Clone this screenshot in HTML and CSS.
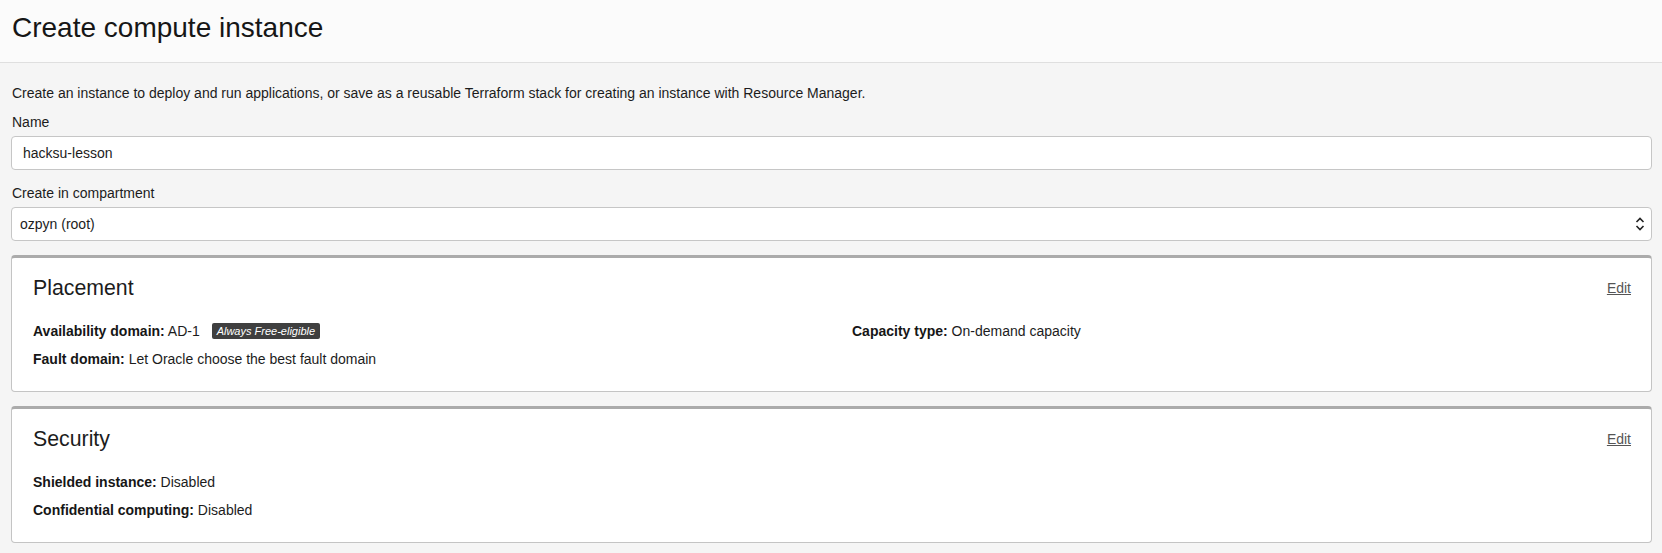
FILE: index.html
```html
<!DOCTYPE html>
<html lang="en">
<head>
<meta charset="utf-8">
<title>Create compute instance</title>
<link rel="stylesheet" href="styles.css">
</head>
<body>
<header class="page-header">
  <h1 class="page-title">Create compute instance</h1>
</header>
<main class="page-body">
  <p class="intro">Create an instance to deploy and run applications, or save as a reusable Terraform stack for creating an instance with Resource Manager.</p>

  <label class="field-label" for="name">Name</label>
  <div class="text-input" id="name">hacksu-lesson</div>

  <label class="field-label second" for="compartment">Create in compartment</label>
  <div class="select-input" id="compartment">
    <span>ozpyn (root)</span>
    <svg class="chevrons" width="10" height="16" viewBox="0 0 10 16" aria-hidden="true">
      <path d="M1.5 6 L5 2.5 L8.5 6" fill="none" stroke="#222" stroke-width="1.6"/>
      <path d="M1.5 10 L5 13.5 L8.5 10" fill="none" stroke="#222" stroke-width="1.6"/>
    </svg>
  </div>

  <section class="card">
    <div class="card-head">
      <h2 class="card-title">Placement</h2>
      <a class="edit-link" href="#">Edit</a>
    </div>
    <div class="card-grid">
      <div class="col">
        <div class="row"><b>Availability domain:</b> AD-1 <span class="badge">Always Free-eligible</span></div>
        <div class="row"><b>Fault domain:</b> Let Oracle choose the best fault domain</div>
      </div>
      <div class="col">
        <div class="row"><b>Capacity type:</b> On-demand capacity</div>
      </div>
    </div>
  </section>

  <section class="card">
    <div class="card-head">
      <h2 class="card-title">Security</h2>
      <a class="edit-link" href="#">Edit</a>
    </div>
    <div class="card-grid single">
      <div class="col">
        <div class="row"><b>Shielded instance:</b> Disabled</div>
        <div class="row"><b>Confidential computing:</b> Disabled</div>
      </div>
    </div>
  </section>
</main>
</body>
</html>
```

FILE: styles.css
```css
* { box-sizing: border-box; }

html, body {
  margin: 0;
  padding: 0;
  background: #f5f5f5;
  color: #1c1c1c;
  font-family: "Liberation Sans", Arial, sans-serif;
  font-size: 14px;
}

.page-header {
  height: 63px;
  background: #fbfbfb;
  border-bottom: 1px solid #dfdfdf;
  padding: 11px 12px 0;
}

.page-title {
  margin: 0;
  font-size: 28px;
  font-weight: normal;
  line-height: 34px;
  color: #161616;
}

.page-body {
  padding: 20px 10px 0 11px;
}

.intro {
  margin: 0 0 0 1px;
  line-height: 20px;
  font-size: 14px;
}

.field-label {
  display: block;
  margin: 9px 0 4px 1px;
  line-height: 20px;
  font-size: 14px;
}

.field-label.second {
  margin-top: 13px;
}

.text-input,
.select-input {
  background: #fff;
  border: 1px solid #c6c6c6;
  border-radius: 4px;
  height: 34px;
  display: flex;
  align-items: center;
  font-size: 14px;
}

.text-input {
  padding-left: 11px;
}

.select-input {
  padding: 0 6px 0 8px;
  justify-content: space-between;
}

.chevrons { display: block; }

.card {
  background: #fff;
  border: 1px solid #c4c4c4;
  border-top: 3px solid #ababab;
  border-radius: 4px;
  padding: 17px 20px 22px 21px;
  margin-top: 14px;
}

.card + .card { margin-top: 14px; }

.card-head {
  display: flex;
  justify-content: space-between;
  align-items: center;
  height: 26px;
}

.card-title {
  margin: 0;
  font-size: 21.3px;
  font-weight: normal;
  line-height: 26px;
  color: #1c1c1c;
}

.edit-link {
  font-size: 14px;
  color: #555;
  text-decoration: underline;
}

.card-grid {
  display: grid;
  grid-template-columns: 819px 1fr;
  margin-top: 20px;
}

.card-grid.single { grid-template-columns: 1fr; margin-top: 20px; }

.col {
  display: flex;
  flex-direction: column;
  gap: 8px;
}

.row {
  line-height: 20px;
  height: 20px;
  display: flex;
  align-items: center;
  white-space: pre;
}

.row b {
  font-weight: bold;
  color: #161616;
}

.badge {
  display: inline-block;
  margin-left: 8px;
  background: #3f3f3f;
  color: #fff;
  font-style: italic;
  font-size: 11px;
  line-height: 16px;
  height: 16px;
  padding: 0 5px;
  border-radius: 2px;
}
```
